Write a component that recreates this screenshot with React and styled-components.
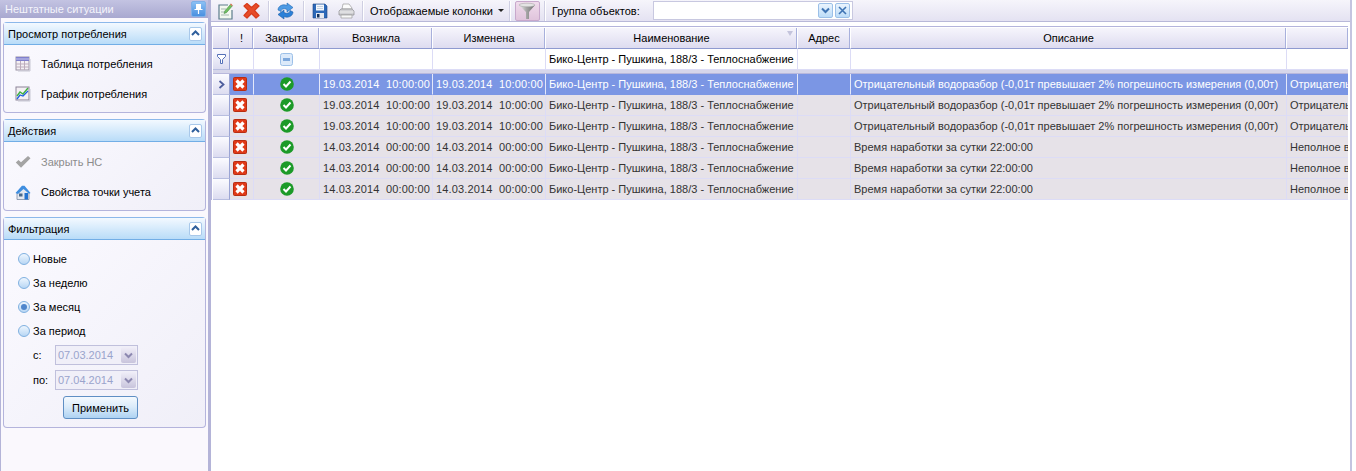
import React from "react"
import styled, { createGlobalStyle } from "styled-components"

const GlobalStyle = createGlobalStyle`
  html, body {
    margin: 0;
    padding: 0;
    background: #fff;
  }
  body {
    font-family: "Liberation Sans", Arial, sans-serif;
    font-size: 11px;
    color: #000;
  }
`

const Page = styled.div`
  display: flex;
  width: 1356px;
  height: 471px;
  overflow: hidden;
`

const Sidebar = styled.aside`
  width: 208px;
  flex: none;
  background: #faf8fd;
  border-right: 3px solid #b4b4d8;
  box-shadow: inset 1px 0 0 #b4b4d8;
`

const PanelTitle = styled.div`
  height: 18px;
  display: flex;
  align-items: center;
  justify-content: space-between;
  padding: 0 2px 0 5px;
  background: linear-gradient(#c3c3e2, #a8a8d0);
  color: #f4f4fb;
  font-size: 11px;
`

const PinButton = styled.div`
  width: 15px;
  height: 16px;
  display: flex;
  align-items: center;
  justify-content: center;
  border-radius: 2px;
  border: 1px solid #7fb0e8;
  background: linear-gradient(#8bc0f4, #4a90e0);
  box-sizing: border-box;
`

const Group = styled.section`
  margin: ${(p) => p.$top}px 2px 0 3px;
  height: ${(p) => p.$height}px;
  box-sizing: border-box;
  border: 1px solid #b4b4dc;
  border-top-color: #8cb8ea;
  border-radius: 4px;
  background: linear-gradient(135deg, #fbfaff, #f0eff8);
`

const GroupHead = styled.div`
  height: 21px;
  display: flex;
  align-items: center;
  justify-content: space-between;
  padding: 0 3px 0 4px;
  border-bottom: 1px solid #72aee6;
  background: linear-gradient(#f3f9ff, #b9dcf8);
  font-size: 11px;
`

const Collapse = styled.div`
  width: 13px;
  height: 14px;
  display: flex;
  align-items: center;
  justify-content: center;
  border: 1px solid #a8c8ea;
  border-radius: 2px;
  background: #fff;
  box-sizing: border-box;
`

const LinkList = styled.div`
  display: flex;
  flex-direction: column;
  gap: 12px;
  padding: ${(p) => p.$top}px 0 0 11px;
`

const LinkRow = styled.div`
  height: 18px;
  display: flex;
  align-items: center;
  gap: 10px;
  color: ${(p) => (p.$disabled ? "#8c8c8c" : "#000")};
  font-size: 11px;
`

const FilterBody = styled.div`
  padding: 7px 0 0 14px;
`

const RadioRow = styled.div`
  height: 24px;
  display: flex;
  align-items: center;
  gap: 3px;
  font-size: 11px;
`

const Radio = styled.span`
  position: relative;
  width: 12px;
  height: 12px;
  border-radius: 50%;
  border: 1px solid #7fb0e0;
  background: linear-gradient(#eef6fe, #b8d6f4);
  box-sizing: border-box;

  &::after {
    content: "";
    display: ${(p) => (p.$on ? "block" : "none")};
    position: absolute;
    inset: 2px;
    border-radius: 50%;
    background: #4f86cc;
  }
`

const DateRow = styled.div`
  display: grid;
  grid-template-columns: 22px 83px;
  align-items: center;
  margin: ${(p) => p.$top}px 0 0 15px;
`

const DateBox = styled.div`
  height: 20px;
  display: flex;
  align-items: center;
  justify-content: space-between;
  box-sizing: border-box;
  padding: 0 1px 0 2px;
  border: 1px solid #c0c0dc;
  background: #f0eff8;
  color: #9aa4cc;
  font-size: 11px;
`

const DateDrop = styled.span`
  width: 15px;
  height: 16px;
  display: flex;
  align-items: center;
  justify-content: center;
  background: linear-gradient(#f0eef8, #c8c4dc);
  border-radius: 2px;
`

const ApplyButton = styled.div`
  width: 75px;
  height: 23px;
  margin: 6px 0 0 45px;
  display: flex;
  align-items: center;
  justify-content: center;
  box-sizing: border-box;
  border: 1px solid #5f8fc4;
  border-radius: 3px;
  background: linear-gradient(#f4f9fe 0%, #dcecfa 45%, #aed2f2 100%);
  font-size: 11px;
`

const Main = styled.main`
  width: 1141px;
  flex: none;
  box-sizing: border-box;
  display: flex;
  flex-direction: column;
  border-right: 2px solid #c4c4e0;
`

const Toolbar = styled.div`
  height: 22px;
  box-sizing: border-box;
  display: flex;
  align-items: center;
  border-bottom: 1px solid #b8b8d8;
  background: linear-gradient(#f6f5fb, #e4e2f2);
`

const ToolIcon = styled.span`
  display: flex;
  align-items: center;
  justify-content: center;
  flex: none;
  width: ${(p) => p.$w}px;
  margin-left: ${(p) => p.$left || 0}px;
`

const ToolSep = styled.span`
  width: 1px;
  height: 20px;
  flex: none;
  margin-left: ${(p) => p.$left || 0}px;
  background: #cfcfe2;
  box-shadow: 1px 0 0 #fff;
`

const ToolText = styled.span`
  flex: none;
  margin-left: ${(p) => p.$left || 0}px;
  font-size: 11px;
`

const Caret = styled.span`
  width: 0;
  height: 0;
  flex: none;
  margin-left: 5px;
  border-left: 3px solid transparent;
  border-right: 3px solid transparent;
  border-top: 3px solid #222;
`

const FunnelButton = styled.span`
  width: 25px;
  height: 20px;
  flex: none;
  margin-left: 5px;
  display: flex;
  align-items: center;
  justify-content: center;
  box-sizing: border-box;
  border: 1px solid #c8a8cc;
  border-radius: 2px;
  background: linear-gradient(#f0dcec, #e0c4dc);
`

const GroupInput = styled.div`
  width: 200px;
  height: 19px;
  flex: none;
  margin-left: 13px;
  display: flex;
  align-items: center;
  justify-content: flex-end;
  gap: 2px;
  padding-right: 2px;
  box-sizing: border-box;
  border: 1px solid #c8c8e0;
  background: #fff;
`

const MiniButton = styled.span`
  width: 15px;
  height: 15px;
  display: flex;
  align-items: center;
  justify-content: center;
  box-sizing: border-box;
  border: 1px solid #9cc0e8;
  border-radius: 2px;
  background: linear-gradient(#eaf4fe, #bcdcf8);
`

const GridFrame = styled.div`
  width: 1137px;
  margin: 4px 0 0 0;
  padding: 1px 0 0 1px;
  border-top: 1px solid #b4b4dc;
  border-left: 1px solid #b4b4dc;
  box-sizing: border-box;
  overflow: hidden;
`

const Row = styled.div`
  display: grid;
  grid-template-columns: 17px 24px 66px 113px 113px 252px 53px 436px 62px;
  height: 21px;
  background: ${(p) => (p.$selected ? "#7b96e4" : p.$data ? "#e6e2e8" : "#fff")};
  color: ${(p) => (p.$selected ? "#fff" : p.$data ? "#333" : "#000")};
`

const HeadCell = styled.div`
  position: relative;
  display: flex;
  align-items: center;
  justify-content: center;
  box-sizing: border-box;
  border-right: 1px solid #fff;
  border-bottom: 1px solid #8f9ad0;
  box-shadow: inset -1px 0 0 #a8b0dc;
  background: linear-gradient(#f6f5fc, #dedcf0);
`

const SortMark = styled.span`
  position: absolute;
  top: 3px;
  right: 4px;
  width: 0;
  height: 0;
  border-left: 3px solid transparent;
  border-right: 3px solid transparent;
  border-top: 5px solid #c4c4dc;
`

const Cell = styled.div`
  display: flex;
  align-items: center;
  justify-content: ${(p) => (p.$center ? "center" : "flex-start")};
  box-sizing: border-box;
  padding: ${(p) => (p.$center ? "0" : "0 0 0 3px")};
  white-space: pre;
  overflow: hidden;
  border-right: 1px solid ${(p) => (p.$selected ? "#e4e8fa" : "#dcdcf6")};
  border-bottom: 1px solid ${(p) => (p.$selected ? "#7b96e4" : "#dcdcf6")};
`

const DateText = styled.span`
  letter-spacing: 0.15px;
`

const RowHandle = styled.div`
  display: flex;
  align-items: center;
  justify-content: center;
  box-sizing: border-box;
  border-right: 1px solid #9aa4d4;
  border-bottom: 1px solid #b8bee0;
  background: linear-gradient(#fbfbff, #dcdcf0);
`

const FilterGap = styled.div`
  height: 4px;
  background: #d6d6ea;
  border-bottom: 1px solid #b8b8dc;
  box-sizing: border-box;
`

const CollapseIcon = () => (
  <svg width="9" height="7" viewBox="0 0 9 7">
    <path d="M1 5 L4.5 1.5 L8 5" fill="none" stroke="#2f5f9c" strokeWidth="2" />
  </svg>
)

const PinIcon = () => (
  <svg width="9" height="12" viewBox="0 0 9 12">
    <path d="M2 1h5v5h1.5v1h-3.4v4h-1.2v-4H.5v-1H2z" fill="#fff" />
  </svg>
)

const TableIcon = () => (
  <svg width="16" height="16" viewBox="0 0 16 16">
    <rect x="1" y="1" width="13" height="13" fill="#f4f0f4" stroke="#9a92a4" />
    <rect x="1" y="1" width="13" height="4" fill="#8080cc" />
    <path d="M1 3h13" stroke="#c8c8f0" />
    <path d="M1 8h13M1 11h13M5.500 5v9M9.500 5v9" stroke="#bcacbc" />
    <path d="M15 3v12H3" stroke="#c8c8d4" fill="none" />
  </svg>
)

const ChartIcon = () => (
  <svg width="16" height="16" viewBox="0 0 16 16">
    <rect x="1" y="1" width="13" height="13" fill="#f4f0f4" stroke="#8c8498" />
    <path d="M2 10l3-4 3 2 5-6" stroke="#40b040" fill="none" strokeWidth="1.400" />
    <path d="M2 13l3-4 3 1 5-5" stroke="#2060e0" fill="none" strokeWidth="1.300" />
    <path d="M15 3v12H3" stroke="#c8c8d4" fill="none" />
  </svg>
)

const CheckGrayIcon = () => (
  <svg width="16" height="14" viewBox="0 0 16 14">
    <path d="M.8 7.500L3.500 5 6 7.300 13 1l2.500 2.300L6 12.800z" fill="#a4a4a4" />
  </svg>
)

const HouseIcon = () => (
  <svg width="16" height="15" viewBox="0 0 16 15">
    <path d="M2 7L8 2l6 5v7.500H2z" fill="#e4e8f0" stroke="#7c8ca4" strokeWidth=".8" />
    <path d="M.5 8L7 .8h2.500L15.500 8l-1.500.8L8.500 4 3 9z" fill="#3f8ee0" />
    <rect x="9.500" y="8" width="3.500" height="6.500" fill="#2272d0" />
    <rect x="4" y="8.500" width="3.500" height="3" fill="#4a6888" />
  </svg>
)

const DropChevron = ({ color = "#8c88b0" }) => (
  <svg width="9" height="7" viewBox="0 0 9 7">
    <path d="M1 1.500L4.500 5 8 1.500" fill="none" stroke={color} strokeWidth="2" />
  </svg>
)

const EditIcon = () => (
  <svg width="17" height="18" viewBox="0 0 17 18">
    <path d="M15 8v9H2V3h9" fill="#f4f8f0" stroke="#5c7c8c" strokeWidth="1.200" />
    <path d="M4 7h5M4 10h4M4 13h8" stroke="#a4b8b0" />
    <path d="M7 11.500l.8-2.500 6-7 1.700 1.700-6 7z" fill="#70c060" stroke="#408040" strokeWidth=".5" />
    <path d="M14 1.500l1.700 1.700-.9.900-1.700-1.700z" fill="#e87860" />
  </svg>
)

const BigCross = () => (
  <svg width="17" height="17" viewBox="0 0 17 17">
    <path
      d="M4 1.500L8.500 5.500 13 1.500 16 4 11.500 8.500 16 13.500 13 16 8.500 11.500 4 16 1 13.500 5.500 8.500 1 4z"
      fill="#e64c28"
      stroke="#d83c1c"
      strokeWidth="1.200"
      strokeLinejoin="round"
    />
  </svg>
)

const RefreshIcon = () => (
  <svg width="17" height="18" viewBox="0 0 17 18">
    <path d="M1 8c0-4 5-6.500 9-4.500V1l6 4.500L10 10V7.500C7 6 4 7 4 9.500z" fill="#4c9ae4" stroke="#2068b4" strokeWidth=".6" />
    <path d="M16 10c0 4-5 6.500-9 4.500V17l-6-4.500L7 8v2.500c3 1.500 6 .5 6-2z" fill="#2c80d8" stroke="#1c5ca4" strokeWidth=".6" />
  </svg>
)

const SaveIcon = () => (
  <svg width="16" height="16" viewBox="0 0 16 16">
    <path d="M1 1h12l2 2v12H1z" fill="#2c68b8" stroke="#1c4484" strokeWidth=".6" />
    <rect x="4" y="1.500" width="8" height="6" fill="#f4f8fc" />
    <path d="M5 3.500h6M5 5.500h6" stroke="#c4d0e0" />
    <rect x="4" y="10" width="8" height="5" fill="#e4e8f0" />
    <rect x="5" y="11" width="2.500" height="3.500" fill="#16325c" />
  </svg>
)

const PrintIcon = () => (
  <svg width="17" height="16" viewBox="0 0 17 16">
    <path d="M4 6L5 1h6l3 4v1z" fill="#fcfcfc" stroke="#9c9c9c" strokeWidth=".7" />
    <path d="M1 8l2-2h11l2 2v4H1z" fill="#d0d0d4" stroke="#8c8c90" strokeWidth=".7" />
    <path d="M3 12h11v3H3z" fill="#f8f8f8" stroke="#9c9c9c" strokeWidth=".7" />
    <path d="M1.500 9h14" stroke="#eeeeee" />
  </svg>
)

const FunnelIcon = () => (
  <svg width="18" height="18" viewBox="0 0 18 18">
    <defs>
      <linearGradient id="funnelCone" x1="0" x2="1" y1="0" y2="0">
        <stop offset="0" stopColor="#f4f4f4" />
        <stop offset="0.45" stopColor="#a8a8a8" />
        <stop offset="1" stopColor="#6c6c6c" />
      </linearGradient>
    </defs>
    <path d="M1 3h16l-6 7v7H8v-7z" fill="url(#funnelCone)" />
    <ellipse cx="9" cy="3" rx="8" ry="1.800" fill="#e4e4e4" stroke="#9c9c9c" strokeWidth=".5" />
  </svg>
)

const FilterRowIcon = () => (
  <svg width="9" height="10" viewBox="0 0 9 10">
    <path d="M.5.500h8v2L5.500 5.500v4h-2v-4L.5 2.500z" fill="#fff" stroke="#5470b8" />
  </svg>
)

const ClearIcon = () => (
  <svg width="9" height="9" viewBox="0 0 9 9">
    <path d="M1 1l7 7M8 1L1 8" stroke="#3f74b4" strokeWidth="1.600" />
  </svg>
)

const MiniCheckbox = () => (
  <svg width="13" height="13" viewBox="0 0 13 13">
    <rect x=".5" y=".5" width="12" height="12" rx="2" fill="#dceafa" stroke="#9cc0e8" />
    <rect x="3" y="5" width="7" height="3" fill="#7ea8dc" />
  </svg>
)

const RowArrow = () => (
  <svg width="7" height="9" viewBox="0 0 7 9">
    <path d="M1.500 1L5.500 4.500 1.500 8" fill="none" stroke="#4c5c9c" strokeWidth="1.800" />
  </svg>
)

const AlarmIcon = () => (
  <svg width="14" height="14" viewBox="0 0 14 14">
    <rect x=".5" y=".5" width="13" height="13" rx="1" fill="#e03a18" stroke="#b82c10" />
    <path d="M3.500 3.500l7 7M10.500 3.500l-7 7" stroke="#fff" strokeWidth="3.200" />
  </svg>
)

const ClosedIcon = () => (
  <svg width="14" height="14" viewBox="0 0 14 14">
    <circle cx="7" cy="7" r="6.800" fill="#1c9a28" />
    <path d="M3.500 7l2.500 2.500 4.500-5" fill="none" stroke="#fff" strokeWidth="2" />
  </svg>
)

const GroupHeader = ({ title }) => (
  <GroupHead>
    {title}
    <Collapse>
      <CollapseIcon />
    </Collapse>
  </GroupHead>
)

const columns = ["Закрыта", "Возникла", "Изменена", "Наименование", "Адрес", "Описание", ""]

const name = "Бико-Центр - Пушкина, 188/3 - Теплоснабжение"
const negative = "Отрицательный водоразбор (-0,01т превышает 2% погрешность измерения (0,00т)"
const runtime = "Время наработки за сутки 22:00:00"

const rows = [
  { date: "19.03.2014  10:00:00", text: negative, extra: "Отрицатель", selected: true },
  { date: "19.03.2014  10:00:00", text: negative, extra: "Отрицатель" },
  { date: "19.03.2014  10:00:00", text: negative, extra: "Отрицатель" },
  { date: "14.03.2014  00:00:00", text: runtime, extra: "Неполное в" },
  { date: "14.03.2014  00:00:00", text: runtime, extra: "Неполное в" },
  { date: "14.03.2014  00:00:00", text: runtime, extra: "Неполное в" },
]

const App = () => {
  return (
    <Page>
      <GlobalStyle />
      <Sidebar>
        <PanelTitle>
          Нештатные ситуации
          <PinButton>
            <PinIcon />
          </PinButton>
        </PanelTitle>

        <Group $top={4} $height={91}>
          <GroupHeader title="Просмотр потребления" />
          <LinkList $top={10}>
            <LinkRow>
              <TableIcon />
              Таблица потребления
            </LinkRow>
            <LinkRow>
              <ChartIcon />
              График потребления
            </LinkRow>
          </LinkList>
        </Group>

        <Group $top={6} $height={92}>
          <GroupHeader title="Действия" />
          <LinkList $top={11}>
            <LinkRow $disabled>
              <CheckGrayIcon />
              Закрыть НС
            </LinkRow>
            <LinkRow>
              <HouseIcon />
              Свойства точки учета
            </LinkRow>
          </LinkList>
        </Group>

        <Group $top={6} $height={211}>
          <GroupHeader title="Фильтрация" />
          <FilterBody>
            <RadioRow>
              <Radio />
              Новые
            </RadioRow>
            <RadioRow>
              <Radio />
              За неделю
            </RadioRow>
            <RadioRow>
              <Radio $on />
              За месяц
            </RadioRow>
            <RadioRow>
              <Radio />
              За период
            </RadioRow>
            <DateRow $top={2}>
              <span>с:</span>
              <DateBox>
                07.03.2014
                <DateDrop>
                  <DropChevron />
                </DateDrop>
              </DateBox>
            </DateRow>
            <DateRow $top={5}>
              <span>по:</span>
              <DateBox>
                07.04.2014
                <DateDrop>
                  <DropChevron />
                </DateDrop>
              </DateBox>
            </DateRow>
            <ApplyButton>Применить</ApplyButton>
          </FilterBody>
        </Group>
      </Sidebar>

      <Main>
        <Toolbar>
          <ToolIcon $w={17} $left={6}>
            <EditIcon />
          </ToolIcon>
          <ToolIcon $w={17} $left={9}>
            <BigCross />
          </ToolIcon>
          <ToolSep $left={8} />
          <ToolIcon $w={17} $left={8}>
            <RefreshIcon />
          </ToolIcon>
          <ToolSep $left={9} />
          <ToolIcon $w={16} $left={8}>
            <SaveIcon />
          </ToolIcon>
          <ToolIcon $w={17} $left={10}>
            <PrintIcon />
          </ToolIcon>
          <ToolSep $left={7} />
          <ToolText $left={7}>Отображаемые колонки</ToolText>
          <Caret />
          <ToolSep $left={5} />
          <FunnelButton>
            <FunnelIcon />
          </FunnelButton>
          <ToolSep $left={4} />
          <ToolText $left={7}>Группа объектов:</ToolText>
          <GroupInput>
            <MiniButton>
              <DropChevron color="#3f74b4" />
            </MiniButton>
            <MiniButton>
              <ClearIcon />
            </MiniButton>
          </GroupInput>
        </Toolbar>

        <GridFrame>
          <Row>
            <HeadCell />
            <HeadCell>!</HeadCell>
            {columns.map((col, i) => (
              <HeadCell key={i}>
                {col}
                {col === "Наименование" && <SortMark />}
              </HeadCell>
            ))}
          </Row>
          <Row>
            <RowHandle>
              <FilterRowIcon />
            </RowHandle>
            <Cell $center />
            <Cell $center>
              <MiniCheckbox />
            </Cell>
            <Cell />
            <Cell />
            <Cell>{name}</Cell>
            <Cell />
            <Cell />
            <Cell />
          </Row>
          <FilterGap />
          {rows.map((row, i) => (
            <Row key={i} $data $selected={row.selected}>
              <RowHandle>{row.selected && <RowArrow />}</RowHandle>
              <Cell $selected={row.selected}>
                <AlarmIcon />
              </Cell>
              <Cell $center $selected={row.selected}>
                <ClosedIcon />
              </Cell>
              <Cell $selected={row.selected}>
                <DateText>{row.date}</DateText>
              </Cell>
              <Cell $selected={row.selected}>
                <DateText>{row.date}</DateText>
              </Cell>
              <Cell $selected={row.selected}>{name}</Cell>
              <Cell $selected={row.selected} />
              <Cell $selected={row.selected}>{row.text}</Cell>
              <Cell $selected={row.selected}>{row.extra}</Cell>
            </Row>
          ))}
        </GridFrame>
      </Main>
    </Page>
  )
}

export default App
